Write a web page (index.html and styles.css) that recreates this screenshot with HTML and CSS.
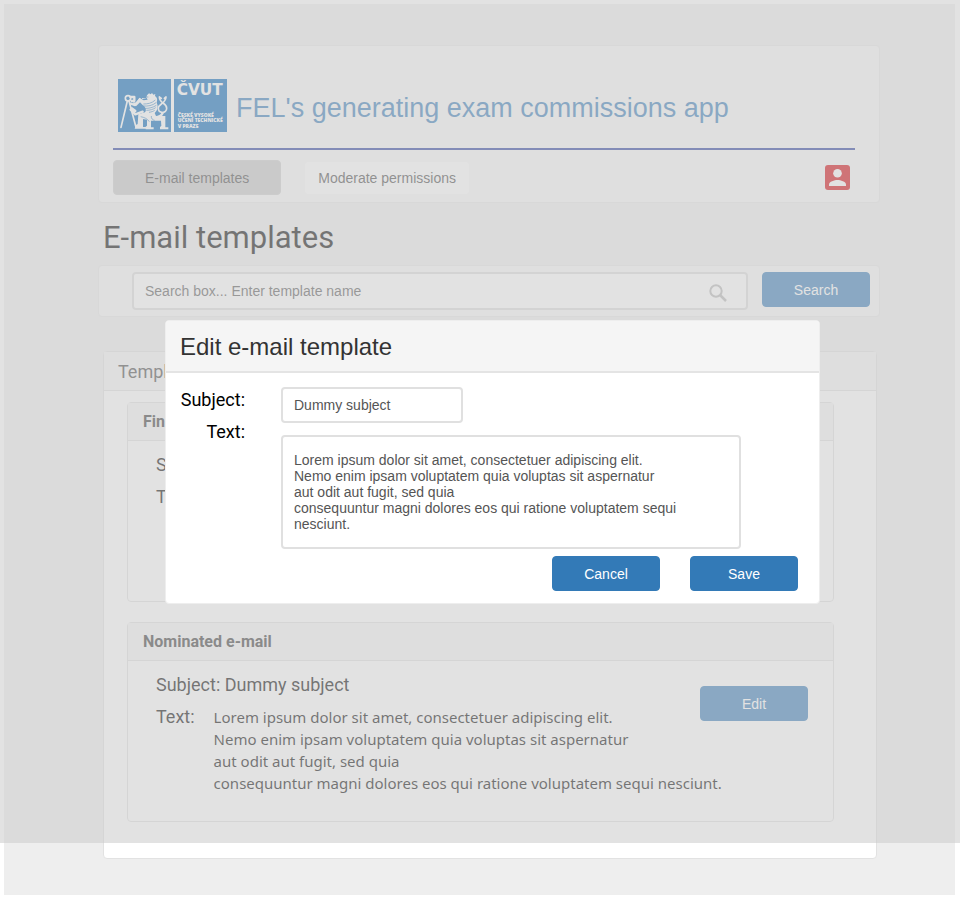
FILE: index.html
```html
<!DOCTYPE html>
<html lang="en">
<head>
<meta charset="utf-8">
<meta name="viewport" content="width=device-width, initial-scale=1">
<title>E-mail templates</title>
<link rel="stylesheet" href="styles.css">
</head>
<body>
<div class="page">
  <div class="app">
    <header class="card header">
      <div class="brand">
        <svg class="logo" viewBox="0 0 327 159" role="img" aria-label="ČVUT">
          <rect width="327" height="159" fill="#fff"/>
          <rect width="159" height="159" fill="#0065b8"/>
          <rect x="168" width="159" height="159" fill="#0065b8"/>
          <g fill="none" stroke="#fff" stroke-linecap="round" stroke-linejoin="round">
            <circle cx="30" cy="58" r="8" stroke-width="5"/>
            <path d="M28 66L9 145M33 66l21 79" stroke-width="5"/>
            <path d="M37 54h12v12h-8M38 74l12 4 16-16M38 92l14 14 22-8M42 88l10 8" stroke-width="7"/>
            <path d="M124 54c1 22 22 16 22 34 0 17-25 16-25 0 0-14 22-14 23-34M124 54l6 4M144 54l-5 4" stroke-width="5"/>
            <path d="M134 102c-4 9-12 12-22 13" stroke-width="7"/>
          </g>
          <path d="M72 60l12-2 3-9 6-6 5 3 4-4 4 5 6-2-1 6c8 5 7 13 5 20 6 12 2 23-6 31l4 9h28v34h9v6h-25v-7l4-3-1-16H99v20h8v6H83v-8l4-3v-18l-12-2v24h8v5H50l4-11 5-3 2-29 20-6c6-6 1-17-7-22l-8-8-12 12-9-4 1-8 8 1 10-15 13 8 12-2-3-5H72z" fill="#fff"/>
          <g fill="none" stroke="#0065b8" stroke-width="2">
            <path d="M82 54h9M76 75c13 0 25-2 36-12M76 81c14 1 27-1 38-10M80 88c13 1 26-3 35-9M85 94c11 0 21-3 28-8M93 100c7-1 13-3 17-6M68 113c11 2 20 6 26 15M100 111c-1 8 4 12 10 13"/>
          </g>
          <g class="logo-text" fill="#fff">
            <text class="logo-name" x="176" y="47">ČVUT</text>
            <text class="logo-sub" x="179" y="113">ČESKÉ VYSOKÉ</text>
            <text class="logo-sub" x="179" y="130">UČENÍ TECHNICKÉ</text>
            <text class="logo-sub" x="179" y="147">V PRAZE</text>
          </g>
        </svg>
        <h1 class="app-name">FEL's generating exam commissions app</h1>
      </div>
      <nav class="nav">
        <button type="button" class="tab tab-active">E-mail templates</button>
        <button type="button" class="tab">Moderate permissions</button>
        <button type="button" class="profile" aria-label="Profile">
          <svg viewBox="0 0 25 25" aria-hidden="true">
            <rect width="25" height="25" rx="3" fill="#d40008"/>
            <circle cx="12.500" cy="8.300" r="4.300" fill="#fff"/>
            <path d="M4 21v-1.500c0-3 5.500-4.500 8.500-4.500s8.500 1.500 8.500 4.500V21z" fill="#fff"/>
          </svg>
        </button>
      </nav>
    </header>

    <h2 class="page-title">E-mail templates</h2>

    <form class="card search">
      <div class="search-field">
        <input type="text" aria-label="Template name" placeholder="Search box... Enter template name">
        <svg class="search-icon" viewBox="0 0 18 18" fill="none" stroke="#b7b7b7" stroke-width="2" aria-hidden="true">
          <circle cx="7" cy="7" r="5.700"/>
          <path d="M11 11l6 6" stroke-width="2.500"/>
        </svg>
      </div>
      <button type="button" class="btn">Search</button>
    </form>

    <main class="panel templates">
      <div class="panel-head">Templates</div>
      <div class="list">
        <section class="panel template">
          <h3 class="template-head">Final</h3>
          <div class="template-body">
            <div class="subject">Subject:</div>
            <div class="message"><span>Text:</span></div>
          </div>
        </section>
        <section class="panel template">
          <h3 class="template-head">Nominated e-mail</h3>
          <div class="template-body">
            <div class="subject">Subject: Dummy subject</div>
            <div class="message">
              <span>Text:</span>
              <p>Lorem ipsum dolor sit amet, consectetuer adipiscing elit.<br>Nemo enim ipsam voluptatem quia voluptas sit aspernatur<br>aut odit aut fugit, sed quia<br>consequuntur magni dolores eos qui ratione voluptatem sequi nesciunt.</p>
            </div>
            <button type="button" class="btn edit">Edit</button>
          </div>
        </section>
      </div>
    </main>
  </div>

  <div class="overlay"></div>
  <div class="modal-layer">
    <div class="modal" role="dialog" aria-labelledby="modal-title">
      <h2 class="modal-title" id="modal-title">Edit e-mail template</h2>
      <form class="modal-body">
        <div class="fields">
          <label for="subject">Subject:</label>
          <input id="subject" type="text" value="Dummy subject">
          <label for="text">Text:</label>
          <textarea id="text">Lorem ipsum dolor sit amet, consectetuer adipiscing elit.
Nemo enim ipsam voluptatem quia voluptas sit aspernatur
aut odit aut fugit, sed quia
consequuntur magni dolores eos qui ratione voluptatem sequi nesciunt.</textarea>
        </div>
        <div class="actions">
          <button type="button" class="btn">Cancel</button>
          <button type="button" class="btn">Save</button>
        </div>
      </form>
    </div>
  </div>
</div>
</body>
</html>
```
FILE: styles.css
```css
* {
  box-sizing: border-box;
}

body {
  margin: 0;
  background: #fff;
  color: #333;
  font-family: Roboto, sans-serif;
}

h1, h2, h3, p {
  margin: 0;
  font-weight: 400;
}

button, input, textarea {
  font: 14px/16px "Liberation Sans", sans-serif;
}

.page {
  position: relative;
  padding: 4px 5px 5px 4px;
}

.app {
  padding: 41px 75px 36px 94px;
  background: #eee;
}

.card, .panel {
  border: 1px solid #e2e2e2;
  border-radius: 4px;
}

.card {
  background: #f8f8f8;
  border-color: #e7e7e7;
}

.panel {
  background: #fff;
}

.header {
  padding: 33px 24px 7px 14px;
}

.brand {
  display: flex;
  align-items: center;
  gap: 9px;
  padding: 0 5px 16px;
  border-bottom: 2px solid #23389c;
}

.logo {
  width: 109px;
  height: 53px;
}

.logo-text {
  font-family: "Open Sans", sans-serif;
  font-weight: 800;
}

.logo-name {
  font-family: "DejaVu Sans", sans-serif;
  font-size: 46px;
}

.logo-sub {
  font-size: 15px;
}

.app-name {
  padding-top: 4px;
  color: #337ab7;
  font: 27px/32px "Liberation Sans", sans-serif;
}

.nav {
  display: flex;
  align-items: center;
  gap: 24px;
  padding-top: 10px;
}

.tab {
  height: 32px;
  padding: 0 13px;
  border: 0;
  border-radius: 4px;
  background: #fff;
  color: #444;
}

.tab-active {
  height: 35px;
  padding: 0 31px;
  border: 1px solid #ccc;
  background: #c8c8c8;
}

.profile {
  width: 25px;
  height: 25px;
  margin: 0 5px 0 auto;
  padding: 0;
  border: 0;
  background: none;
}

.profile svg {
  display: block;
}

.page-title {
  padding: 15px 5px 7px;
  color: #000;
  font-size: 31px;
  line-height: 40px;
}

.search {
  display: flex;
  align-items: flex-start;
  gap: 14px;
  padding: 6px 9px 6px 33px;
}

.search-field {
  position: relative;
  flex: 1;
}

.search-field input {
  display: block;
  width: 100%;
  height: 38px;
  padding: 0 11px;
  border: 2px solid #ddd;
  border-radius: 4px;
  background: #fff;
}

.search-field input::placeholder {
  color: #555;
}

.search-icon {
  position: absolute;
  right: 21px;
  bottom: 8px;
  width: 18px;
  height: 18px;
}

.btn {
  width: 108px;
  height: 35px;
  padding: 0;
  border: 1px solid #337ab7;
  border-radius: 4px;
  background: #337ab7;
  color: #fff;
}

.templates {
  margin: 34px 3px 0 5px;
}

.panel-head {
  padding: 8px 14px 6px;
  border-bottom: 1px solid #e2e2e2;
  background: #f5f5f5;
  color: #444;
  font-size: 18px;
  line-height: 24px;
}

.list {
  display: grid;
  gap: 20px;
  padding: 11px 42px 36px 23px;
}

.template {
  min-height: 200px;
}

.template-head {
  padding: 7px 15px 6px;
  border-bottom: 1px solid #e2e2e2;
  background: #f5f5f5;
  font-size: 16px;
  font-weight: 700;
  line-height: 24px;
}

.template-body {
  position: relative;
  padding: 13px 25px 13px 28px;
  color: #000;
  font-size: 18px;
  line-height: 22px;
}

.message {
  display: flex;
  gap: 19px;
  padding-top: 10px;
}

.message p {
  font-family: "Noto Sans", sans-serif;
  font-size: 15px;
}

.edit {
  position: absolute;
  top: 25px;
  right: 25px;
}

.overlay {
  position: absolute;
  inset: 0 0 57px;
  background: rgba(204, 204, 204, 0.57);
}

.modal-layer {
  position: absolute;
  inset: 320px 140px auto 165px;
}

.modal {
  overflow: hidden;
  border: 1px solid #eee;
  border-radius: 4px;
  background: #fff;
}

.modal-title {
  padding: 11px 14px 9px;
  border-bottom: 2px solid #e4e4e4;
  background: #f5f5f5;
  font: 24px/30px "Liberation Sans", sans-serif;
}

.modal-body {
  padding: 14px 21px 12px 15px;
}

.fields {
  display: grid;
  grid-template-columns: 64px 1fr;
  gap: 12px 36px;
  padding-right: 57px;
  color: #000;
  font-size: 18px;
  line-height: 26px;
}

.fields label {
  justify-self: end;
}

.fields label[for="text"] {
  margin-top: -16px;
}

.fields input, .fields textarea {
  border: 2px solid #e0e0e0;
  border-radius: 4px;
  background: #fff;
  color: #555;
}

.fields input {
  width: 182px;
  height: 36px;
  padding: 0 11px;
}

.fields textarea {
  width: 100%;
  height: 114px;
  padding: 15px 11px;
  overflow: hidden;
  resize: none;
}

.actions {
  display: flex;
  justify-content: flex-end;
  gap: 30px;
  padding-top: 7px;
}
```
